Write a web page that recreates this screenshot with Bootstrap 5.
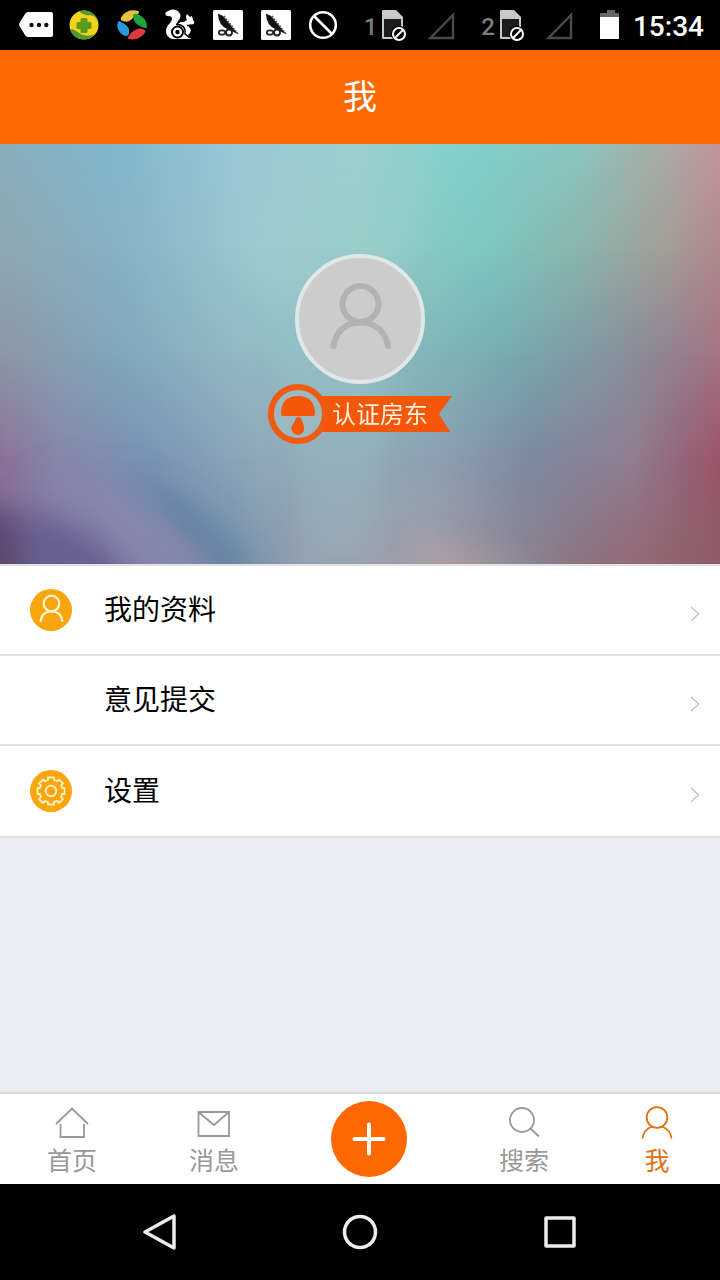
<!DOCTYPE html>
<html lang="zh-CN">
<head>
<meta charset="utf-8">
<meta name="viewport" content="width=device-width, initial-scale=1">
<title>我</title>
<link href="https://cdn.jsdelivr.net/npm/bootstrap@5.3.0/dist/css/bootstrap.min.css" rel="stylesheet">
<style>
  body { font-family: "Noto Sans CJK SC", sans-serif; background: #ecedf2; color: #000; }
  svg { display: block; flex: none; }
  .status-bar { height: 50px; padding: 0 16px 0 18px; font-family: Roboto, "Noto Sans CJK SC", sans-serif; }
  .status-icons { gap: 12px; }
  .status-clock { font-size: 28px; line-height: 32px; font-weight: 500; padding-top: 4px; }
  .sim-number { font-size: 24px; line-height: 28px; font-weight: 500; color: #7d7d7d; padding-top: 4px; }
  .sim-signal { gap: 20px; margin-right: 26px; }
  .title-bar { height: 94px; padding-bottom: 4px; background: #ff6700; }
  .title-bar h1 { font-size: 34px; line-height: 48px; font-weight: 400; }
  .hero { padding: 110px 0 120px; background: #8fb3bd; }
  .hero-backdrop { inset: 0; }
  .avatar { width: 130px; height: 130px; padding: 0; border: 4px solid #e1e6e7; background: #ccc; }
  .ribbon-text { left: 64px; top: 11px; font-size: 24px; line-height: 36px; color: #fff0dc; }
  .menu-list { border-top: 2px solid #e2e3e5; border-bottom: 2px solid #e2e3e5; background: #fff; }
  .menu-row { height: 90px; padding: 0 20px 0 30px; gap: 32px; color: #000; font-size: 28px; line-height: 40px; }
  .menu-row:not(:last-child) { border-bottom: 2px solid #e2e3e5; }
  .menu-label { padding-bottom: 4px; }
  .menu-icon { width: 42px; height: 42px; }
  .tab-bar { height: 92px; padding: 0 47px; border-top: 2px solid #dadbe1; }
  .tab-link { color: #999; font-size: 25px; line-height: 36px; padding-top: 4px; gap: 1px; }
  .tab-link.active { color: #e2700f; }
  .add-btn { width: 76px; height: 76px; background: #ff6700; }
  .system-nav { height: 96px; padding: 0 60px; }
</style>
</head>
<body class="d-flex flex-column min-vh-100">

<div class="status-bar bg-black text-white d-flex align-items-center justify-content-between">
  <div class="status-icons d-flex align-items-center">
    <svg width="36" height="36" viewBox="0 0 36 36"><path d="M10 5H33Q35 5 35 7V28Q35 30 33 30H10Q8 30 7 28L1.500 19Q.8 17.500 1.500 16L7 7Q8 5 10 5Z" fill="#fff"/><g fill="#111"><circle cx="13.500" cy="18" r="2.200"/><circle cx="21" cy="18" r="2.200"/><circle cx="28.300" cy="18" r="2.200"/></g></svg>
    <svg width="36" height="36" viewBox="0 0 36 36"><circle cx="18" cy="18" r="14.500" fill="#f5d21b"/><path d="M4 22A14.500 14.500 0 0 0 29 27Q20 31 13 26Q8 22 4 22Z" fill="#4a9b34"/><path d="M13 4.500A14.500 14.500 0 0 1 32 14Q29 8 23 8Q18 9 13 4.500Z" fill="#4a9b34"/><path d="M16 12.500h4v4h4v4h-4v4h-4v-4h-4v-4h4z" fill="#5a9a1c" stroke="#5a9a1c" stroke-width="3" stroke-linejoin="round"/></svg>
    <svg width="36" height="36" viewBox="0 0 36 36"><path d="M7 13Q6 11 8 9Q14 1 24 4Q26 5 24 7Q20 9 18 12Q14 16 9 14Q7 14 7 13Z" fill="#e5c23a"/><path d="M19 9Q19 6 23 7Q32 10 33 19Q33 22 31 21Q27 20 24 18Q19 14 19 9Z" fill="#1fa33c"/><path d="M31 23Q32 24 30 27Q24 34 15 32Q12 31 15 29Q17 25 21 23Q26 20 31 23Z" fill="#dc3a3c"/><path d="M4 15Q5 13 7 15Q14 18 15 23Q16 28 13 29Q8 29 5 24Q2 19 4 15Z" fill="#2b9add"/></svg>
    <svg width="36" height="36" viewBox="0 0 36 36"><path d="M3 6Q10 0 16 4Q21 9 16 14Q13 18 16 17Q19 14 22 15L25 13Q23 10 25 7L28 10L30 9L31 13Q34 16 30 18Q25 18 27 20Q31 24 26 28L29 32H10Q4 30 4 24Q4 20 8 16Q12 11 8 9Q4 10 3 6Z" fill="#fff"/><circle cx="15.500" cy="25" r="5.500" fill="none" stroke="#000" stroke-width="2"/><circle cx="15.500" cy="25" r="2.200" fill="#000"/><path d="M14 17.500Q24 17 23 27L28 31M25 18.500Q28 18.500 31 18" fill="none" stroke="#000" stroke-width="1.500"/></svg>
    <svg width="36" height="36" viewBox="0 0 36 36"><rect x="3" y="3" width="30" height="30" rx="1.500" fill="#fff"/><path d="M8 6.500L13 9L22 20L28 27L19 23Q8 19 8 6.500Z" fill="#111"/><path d="M14 9L28 27" stroke="#555" stroke-width="1.500" stroke-dasharray="2 1"/><g fill="#fff" stroke="#222" stroke-width="1.800"><ellipse cx="12" cy="25.500" rx="3.200" ry="2.200"/><circle cx="19" cy="25.500" r="3"/></g></svg>
    <svg width="36" height="36" viewBox="0 0 36 36"><rect x="3" y="3" width="30" height="30" rx="1.500" fill="#fff"/><path d="M8 6.500L13 9L22 20L28 27L19 23Q8 19 8 6.500Z" fill="#111"/><path d="M14 9L28 27" stroke="#555" stroke-width="1.500" stroke-dasharray="2 1"/><g fill="#fff" stroke="#222" stroke-width="1.800"><ellipse cx="12" cy="25.500" rx="3.200" ry="2.200"/><circle cx="19" cy="25.500" r="3"/></g></svg>
    <svg width="36" height="36" viewBox="0 0 36 36" fill="none" stroke="#fff" stroke-width="2.600"><circle cx="17" cy="18" r="12.800"/><path d="M8 9L26 27"/></svg>
  </div>
  <div class="d-flex align-items-center">
    <div class="sim-signal d-flex align-items-center">
      <div class="d-flex align-items-center gap-1"><span class="sim-number">1</span>
        <svg width="26" height="34" viewBox="0 0 26 34"><path d="M2 2H15L22 9V31H2Q1 31 1 30V3Q1 2 2 2Z" fill="#c9c9c9"/><path d="M3 11H20V29H3Z" fill="#1c1c1c"/><circle cx="18" cy="26" r="8" fill="#000"/><circle cx="18" cy="26" r="6" fill="none" stroke="#fff" stroke-width="2"/><path d="M14 30L22 22" stroke="#fff" stroke-width="2"/></svg></div>
      <svg width="28" height="30" viewBox="0 0 28 30"><path d="M3.500 28H26V5Z" fill="none" stroke="#494949" stroke-width="2.500"/></svg>
    </div>
    <div class="sim-signal d-flex align-items-center">
      <div class="d-flex align-items-center gap-1"><span class="sim-number">2</span>
        <svg width="26" height="34" viewBox="0 0 26 34"><path d="M2 2H15L22 9V31H2Q1 31 1 30V3Q1 2 2 2Z" fill="#c9c9c9"/><path d="M3 11H20V29H3Z" fill="#1c1c1c"/><circle cx="18" cy="26" r="8" fill="#000"/><circle cx="18" cy="26" r="6" fill="none" stroke="#fff" stroke-width="2"/><path d="M14 30L22 22" stroke="#fff" stroke-width="2"/></svg></div>
      <svg width="28" height="30" viewBox="0 0 28 30"><path d="M3.500 28H26V5Z" fill="none" stroke="#494949" stroke-width="2.500"/></svg>
    </div>
    <svg width="34" height="30" viewBox="0 0 34 30"><path d="M8 0H16V3H20V8H1V3H8Z" fill="#666" transform="translate(0 0)"/><path d="M1 7H20V29H1Z" fill="#fff"/></svg>
    <span class="status-clock">15:34</span>
  </div>
</div>

<header class="title-bar d-flex align-items-center justify-content-center text-white">
  <h1 class="m-0">我</h1>
</header>

<section class="hero position-relative overflow-hidden d-flex flex-column align-items-center">
  <svg class="hero-backdrop position-absolute w-100 h-100" viewBox="0 0 720 420" preserveAspectRatio="none" aria-hidden="true">
    <defs>
      <linearGradient id="row1"><stop offset="0" stop-color="#8aaebb"/><stop offset=".15" stop-color="#7fb6cc"/><stop offset=".333" stop-color="#98c9d5"/><stop offset=".5" stop-color="#9ad1cf"/><stop offset=".64" stop-color="#80d1cb"/><stop offset=".8" stop-color="#8bc5c0"/><stop offset=".92" stop-color="#a8aca4"/><stop offset="1" stop-color="#c3949a"/></linearGradient>
      <linearGradient id="row2"><stop offset="0" stop-color="#8ea7b1"/><stop offset=".167" stop-color="#86b1c4"/><stop offset=".36" stop-color="#9ccad0"/><stop offset=".5" stop-color="#96cdc8"/><stop offset=".67" stop-color="#7dc7c1"/><stop offset=".8" stop-color="#88b5ae"/><stop offset=".92" stop-color="#a19f97"/><stop offset="1" stop-color="#b0888b"/></linearGradient>
      <linearGradient id="row3"><stop offset="0" stop-color="#8c96a6"/><stop offset=".167" stop-color="#80a7ba"/><stop offset=".333" stop-color="#92b9c3"/><stop offset=".5" stop-color="#8dbec0"/><stop offset=".7" stop-color="#75acb0"/><stop offset=".85" stop-color="#84939e"/><stop offset=".94" stop-color="#937f90"/><stop offset="1" stop-color="#a57380"/></linearGradient>
      <linearGradient id="row4"><stop offset="0" stop-color="#8c7096"/><stop offset=".08" stop-color="#8586aa"/><stop offset=".2" stop-color="#7992b5"/><stop offset=".36" stop-color="#90a8b8"/><stop offset=".5" stop-color="#90a9b6"/><stop offset=".62" stop-color="#8c9eb0"/><stop offset=".74" stop-color="#7c889f"/><stop offset=".88" stop-color="#907c90"/><stop offset=".95" stop-color="#96647a"/><stop offset="1" stop-color="#9b5569"/></linearGradient>
      <linearGradient id="row5"><stop offset="0" stop-color="#7a699a"/><stop offset=".167" stop-color="#8580a9"/><stop offset=".32" stop-color="#758fab"/><stop offset=".42" stop-color="#949faf"/><stop offset=".6" stop-color="#a09da8"/><stop offset=".72" stop-color="#8b8492"/><stop offset=".8" stop-color="#8c7584"/><stop offset=".88" stop-color="#946a77"/><stop offset="1" stop-color="#8d5c64"/></linearGradient>
      <linearGradient id="fade" x2="0" y2="1"><stop offset="0" stop-color="#000"/><stop offset="1" stop-color="#fff"/></linearGradient>
      <mask id="from1" maskUnits="userSpaceOnUse" x="0" y="0" width="720" height="420"><path d="M0 0H720V105H0Z" fill="url(#fade)"/><path d="M0 105H720V420H0Z" fill="#fff"/></mask>
      <mask id="from2" maskUnits="userSpaceOnUse" x="0" y="0" width="720" height="420"><path d="M0 105H720V210H0Z" fill="url(#fade)"/><path d="M0 210H720V420H0Z" fill="#fff"/></mask>
      <mask id="from3" maskUnits="userSpaceOnUse" x="0" y="0" width="720" height="420"><path d="M0 210H720V315H0Z" fill="url(#fade)"/><path d="M0 315H720V420H0Z" fill="#fff"/></mask>
      <mask id="from4" maskUnits="userSpaceOnUse" x="0" y="0" width="720" height="420"><path d="M0 315H720V420H0Z" fill="url(#fade)"/></mask>
      <filter id="soft" x="-50%" y="-50%" width="200%" height="200%"><feGaussianBlur stdDeviation="14"/></filter>
      <filter id="blend" filterUnits="userSpaceOnUse" x="-60" y="-60" width="840" height="540"><feGaussianBlur stdDeviation="12"/></filter>
    </defs>
    <rect width="720" height="420" fill="url(#row1)"/>
    <rect width="720" height="420" fill="url(#row2)" mask="url(#from1)"/>
    <rect width="720" height="420" fill="url(#row3)" mask="url(#from2)"/>
    <rect width="720" height="420" fill="url(#row4)" mask="url(#from3)"/>
    <rect width="720" height="420" fill="url(#row5)" mask="url(#from4)"/>
    <g filter="url(#soft)">
      <path d="M-40 366L50 372L100 395L150 460H-40Z" fill="#62598d" opacity=".75"/>
      <path d="M-40 355L15 370L30 460H-40Z" fill="#5a3f63" opacity=".7"/>
      <path d="M30 335L80 322L225 425L170 435Z" fill="#9186b0" opacity=".4"/>
      <path d="M120 325L190 360L255 430L225 430Z" fill="#50779a" opacity=".7"/>
      <path d="M420 395L550 425L420 440Z" fill="#bc9ea8" opacity=".5"/>
    </g>
    <path d="M240 0L430 0L370 420H310Z" fill="#a4cdd2" opacity=".18" filter="url(#blend)"/>
  </svg>

  <button type="button" class="avatar btn rounded-circle position-relative d-flex align-items-center justify-content-center" aria-label="头像">
    <svg width="122" height="122" viewBox="0 0 122 122" fill="none" stroke="#b3b3b3" stroke-width="6" stroke-linecap="round"><circle cx="61.500" cy="46" r="18"/><path d="M34.500 88C37 73 47 64.500 61.500 64.500S86 73 89 88"/></svg>
  </button>
  <div class="position-relative">
    <svg width="184" height="60" viewBox="0 0 184 60" aria-hidden="true"><path d="M50 12H184L171 30L182 48H50Z" fill="#f4570a"/><circle cx="30" cy="30" r="27" fill="#9bb9bf" stroke="#ef5b12" stroke-width="6"/><path d="M13 30Q13 12 30 12T47 30Q47 32 44 32H16Q13 32 13 30Z" fill="#f4570a"/><path d="M30 33Q33 33 34 38Q37 44 35 48Q30 53 25 48Q22 43 27 38Q28 34 30 33Z" fill="#f4570a" stroke="#f4570a"/></svg>
    <span class="ribbon-text position-absolute text-nowrap">认证房东</span>
  </div>
</section>

<main class="flex-grow-1">
  <nav class="menu-list">
    <a href="#profile" class="menu-row d-flex align-items-center text-decoration-none">
      <svg class="menu-icon" viewBox="0 0 42 42"><circle cx="21" cy="21" r="21" fill="#f9a50d"/><g fill="none" stroke="#fff6d8" stroke-width="2.200" stroke-linecap="round"><circle cx="21.500" cy="14.500" r="7.800"/><path d="M10.500 32C11.500 26 15.500 22.300 21.500 22.300S31.500 26 32.500 32"/></g></svg>
      <span class="menu-label flex-grow-1">我的资料</span>
      <svg class="mt-2" width="10" height="16" viewBox="0 0 10 16" fill="none" stroke="#c4c4c4" stroke-width="1.500"><path d="M1 1L8.500 8L1 15"/></svg>
    </a>
    <a href="#feedback" class="menu-row d-flex align-items-center text-decoration-none">
      <span class="menu-icon"></span>
      <span class="menu-label flex-grow-1">意见提交</span>
      <svg class="mt-2" width="10" height="16" viewBox="0 0 10 16" fill="none" stroke="#c4c4c4" stroke-width="1.500"><path d="M1 1L8.500 8L1 15"/></svg>
    </a>
    <a href="#settings" class="menu-row d-flex align-items-center text-decoration-none">
      <svg class="menu-icon" viewBox="0 0 42 42"><circle cx="21" cy="21" r="21" fill="#f9a50d"/><g fill="none" stroke="#fff2c4" stroke-width="1.800" stroke-linejoin="round"><circle cx="21" cy="21" r="5.300"/><path d="M18 7.500H24V10Q25.500 10.500 27 11.300L29 9.500L33 13.500L31 15.500Q31.800 16.500 32 18H34.500V24H32Q31.800 25.500 31 26.800L33 29L29 33L27 31Q25.500 31.800 24 32V34.500H18V32Q16.500 31.800 15 31L13 33L9 29L11 26.800Q10.200 25.500 10 24H7.500V18H10Q10.200 16.500 11 15.500L9 13.500L13 9.500L15 11.300Q16.500 10.500 18 10Z"/></g></svg>
      <span class="menu-label flex-grow-1">设置</span>
      <svg class="mt-2" width="10" height="16" viewBox="0 0 10 16" fill="none" stroke="#c4c4c4" stroke-width="1.500"><path d="M1 1L8.500 8L1 15"/></svg>
    </a>
  </nav>
</main>

<nav class="tab-bar bg-white d-flex align-items-center justify-content-between">
  <a href="#home" class="tab-link d-flex flex-column align-items-center text-decoration-none">
    <svg width="34" height="34" viewBox="0 0 34 34" fill="none" stroke="currentColor" stroke-width="1.800"><path d="M1 18L17 2.500L33 18M5.500 18V31H29V18"/></svg>首页</a>
  <a href="#messages" class="tab-link d-flex flex-column align-items-center text-decoration-none">
    <svg width="34" height="34" viewBox="0 0 34 34" fill="none" stroke="currentColor" stroke-width="1.800"><path d="M1.500 6H32V30H1.500ZM1.500 6L17 19L32 6"/></svg>消息</a>
  <button type="button" class="add-btn btn p-0 border-0 rounded-circle d-flex align-items-center justify-content-center" aria-label="发布">
    <svg width="34" height="34" viewBox="0 0 34 34" stroke="#fff" stroke-width="4" stroke-linecap="round"><path d="M17 2.500V31.500M2.500 17H31.500"/></svg>
  </button>
  <a href="#search" class="tab-link d-flex flex-column align-items-center text-decoration-none">
    <svg width="34" height="34" viewBox="0 0 34 34" fill="none" stroke="currentColor" stroke-width="1.800"><circle cx="15" cy="14" r="12"/><path d="M23.500 22.500L32 30.500"/></svg>搜索</a>
  <a href="#me" class="tab-link active d-flex flex-column align-items-center text-decoration-none" aria-current="page">
    <svg width="32" height="34" viewBox="0 0 32 34" fill="none" stroke="currentColor" stroke-width="1.800"><circle cx="16" cy="11.500" r="10.300"/><path d="M1.500 32.500C2 27 6 22.500 11 20.500M21 20.500C26 22.500 30 27 30.500 32.500"/></svg>我</a>
</nav>

<div class="system-nav bg-black d-flex">
  <button type="button" class="btn border-0 flex-fill w-100 d-flex align-items-center justify-content-center" aria-label="返回"><svg width="34" height="38" viewBox="0 0 34 38" fill="none" stroke="#ececec" stroke-width="3.500" stroke-linejoin="round"><path d="M2 19L31 3V35Z"/></svg></button>
  <button type="button" class="btn border-0 flex-fill w-100 d-flex align-items-center justify-content-center" aria-label="主屏幕"><svg width="36" height="36" viewBox="0 0 36 36" fill="none" stroke="#ececec" stroke-width="3.500"><circle cx="18" cy="18" r="15.500"/></svg></button>
  <button type="button" class="btn border-0 flex-fill w-100 d-flex align-items-center justify-content-center" aria-label="最近任务"><svg width="32" height="32" viewBox="0 0 32 32" fill="none" stroke="#ececec" stroke-width="3.500" stroke-linejoin="round"><path d="M2 2H30V30H2Z"/></svg></button>
</div>

<script src="https://cdn.jsdelivr.net/npm/bootstrap@5.3.0/dist/js/bootstrap.bundle.min.js"></script>
</body>
</html>
